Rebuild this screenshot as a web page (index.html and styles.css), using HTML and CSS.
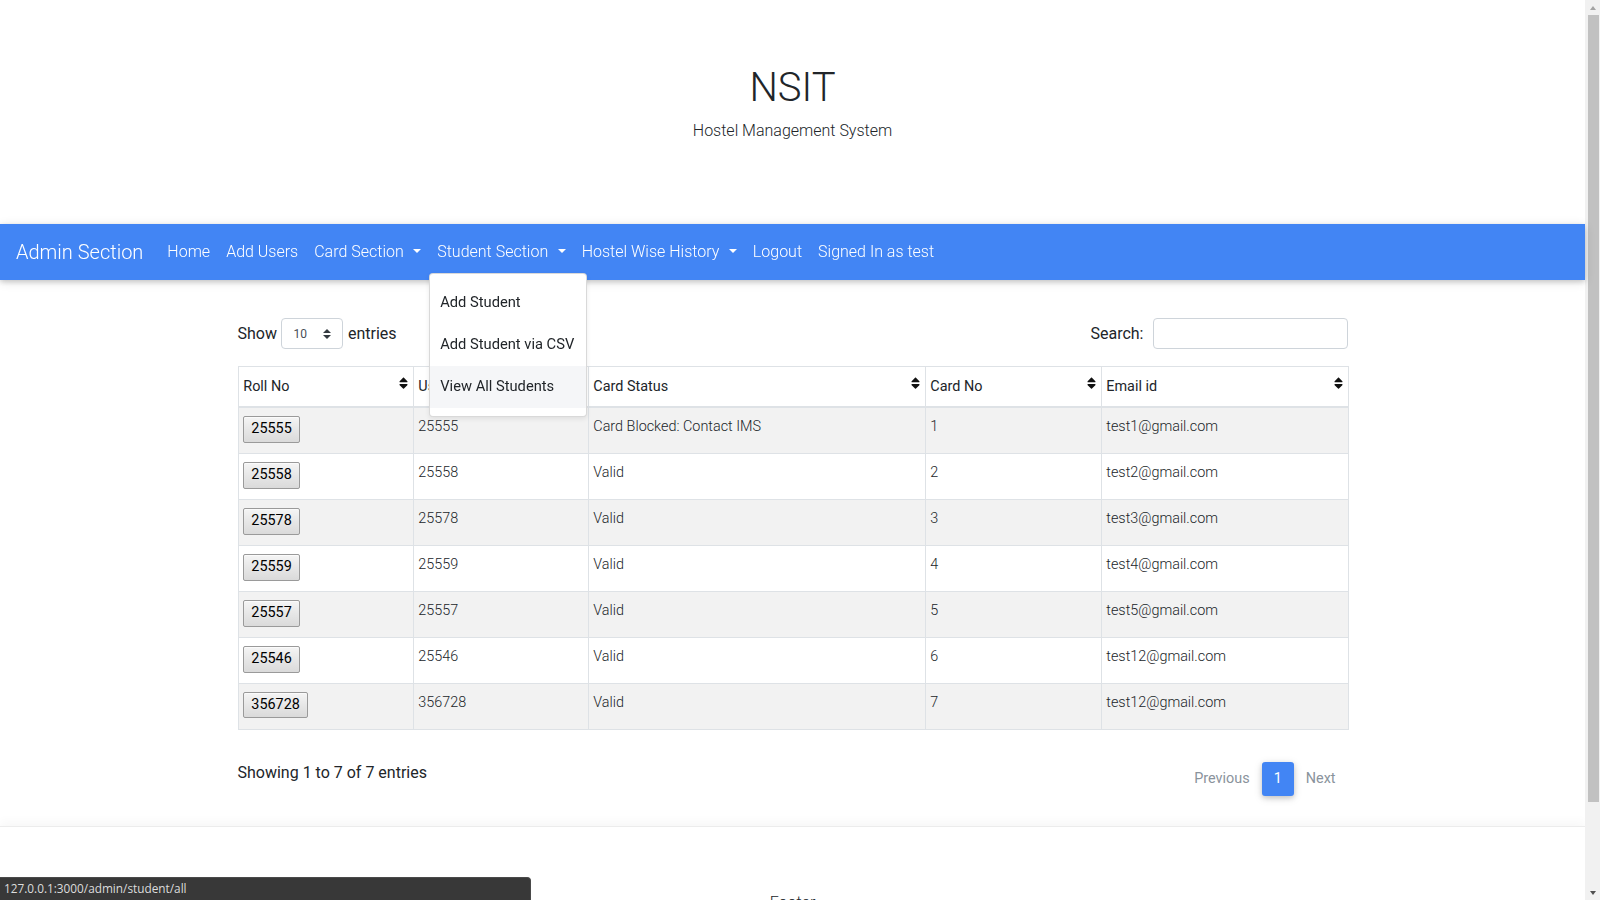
FILE: index.html
```html
<!DOCTYPE html>
<html lang="en">
<head>
<meta charset="utf-8">
<title>Admin - All Students</title>
<link rel="stylesheet" href="styles.css">
</head>
<body>
<div class="page">
  <header class="hero">
    <h1>NSIT</h1>
    <p>Hostel Management System</p>
  </header>

  <nav class="navbar">
    <a class="brand" href="#">Admin Section</a>
    <ul class="nav">
      <li><a class="nav-link" href="#">Home</a></li>
      <li><a class="nav-link" href="#">Add Users</a></li>
      <li><a class="nav-link toggle" href="#">Card Section</a></li>
      <li class="dropdown">
        <a class="nav-link toggle" href="#">Student Section</a>
        <div class="dropdown-menu">
          <a class="dropdown-item" href="#">Add Student</a>
          <a class="dropdown-item" href="#">Add Student via CSV</a>
          <a class="dropdown-item hover" href="#">View All Students</a>
        </div>
      </li>
      <li><a class="nav-link toggle" href="#">Hostel Wise History</a></li>
      <li><a class="nav-link" href="#">Logout</a></li>
      <li><a class="nav-link" href="#">Signed In as test</a></li>
    </ul>
  </nav>

  <main class="container">
    <div class="dt-top">
      <label class="dt-length">Show
        <span class="select-wrap">
          <select class="select"><option>10</option><option>25</option><option>50</option></select>
          <svg class="select-arrow" width="8" height="10" viewBox="0 0 4 5"><path d="M2 0L0 2h4zm0 5L0 3h4z" fill="#343a40"/></svg>
        </span>
        entries</label>
      <label class="dt-search">Search: <input class="search-input" type="search"></label>
    </div>

    <table class="dt-table">
      <colgroup>
        <col class="c-roll"><col class="c-user"><col class="c-status"><col class="c-card"><col class="c-email">
      </colgroup>
      <thead>
        <tr>
          <th><div class="th-in"><span>Roll No</span><svg class="sort" viewBox="0 0 320 512"><path d="M41 288h238c21.4 0 32.1 25.9 17 41L177 448c-9.4 9.4-24.6 9.4-33.9 0L24 329c-15.1-15.1-4.4-41 17-41zm255-105L177 64c-9.4-9.4-24.6-9.4-33.9 0L24 183c-15.1 15.1-4.4 41 17 41h238c21.4 0 32.1-25.9 17-41z"/></svg></div></th>
          <th><div class="th-in"><span>Username</span><svg class="sort" viewBox="0 0 320 512"><path d="M41 288h238c21.4 0 32.1 25.9 17 41L177 448c-9.4 9.4-24.6 9.4-33.9 0L24 329c-15.1-15.1-4.4-41 17-41zm255-105L177 64c-9.4-9.4-24.6-9.4-33.9 0L24 183c-15.1 15.1-4.4 41 17 41h238c21.4 0 32.1-25.9 17-41z"/></svg></div></th>
          <th><div class="th-in"><span>Card Status</span><svg class="sort" viewBox="0 0 320 512"><path d="M41 288h238c21.4 0 32.1 25.9 17 41L177 448c-9.4 9.4-24.6 9.4-33.9 0L24 329c-15.1-15.1-4.4-41 17-41zm255-105L177 64c-9.4-9.4-24.6-9.4-33.9 0L24 183c-15.1 15.1-4.4 41 17 41h238c21.4 0 32.1-25.9 17-41z"/></svg></div></th>
          <th><div class="th-in"><span>Card No</span><svg class="sort" viewBox="0 0 320 512"><path d="M41 288h238c21.4 0 32.1 25.9 17 41L177 448c-9.4 9.4-24.6 9.4-33.9 0L24 329c-15.1-15.1-4.4-41 17-41zm255-105L177 64c-9.4-9.4-24.6-9.4-33.9 0L24 183c-15.1 15.1-4.4 41 17 41h238c21.4 0 32.1-25.9 17-41z"/></svg></div></th>
          <th><div class="th-in"><span>Email id</span><svg class="sort" viewBox="0 0 320 512"><path d="M41 288h238c21.4 0 32.1 25.9 17 41L177 448c-9.4 9.4-24.6 9.4-33.9 0L24 329c-15.1-15.1-4.4-41 17-41zm255-105L177 64c-9.4-9.4-24.6-9.4-33.9 0L24 183c-15.1 15.1-4.4 41 17 41h238c21.4 0 32.1-25.9 17-41z"/></svg></div></th>
        </tr>
      </thead>
      <tbody>
        <tr><td><button class="roll-btn">25555</button></td><td>25555</td><td>Card Blocked: Contact IMS</td><td>1</td><td>test1@gmail.com</td></tr>
        <tr><td><button class="roll-btn">25558</button></td><td>25558</td><td>Valid</td><td>2</td><td>test2@gmail.com</td></tr>
        <tr><td><button class="roll-btn">25578</button></td><td>25578</td><td>Valid</td><td>3</td><td>test3@gmail.com</td></tr>
        <tr><td><button class="roll-btn">25559</button></td><td>25559</td><td>Valid</td><td>4</td><td>test4@gmail.com</td></tr>
        <tr><td><button class="roll-btn">25557</button></td><td>25557</td><td>Valid</td><td>5</td><td>test5@gmail.com</td></tr>
        <tr><td><button class="roll-btn">25546</button></td><td>25546</td><td>Valid</td><td>6</td><td>test12@gmail.com</td></tr>
        <tr><td><button class="roll-btn">356728</button></td><td>356728</td><td>Valid</td><td>7</td><td>test12@gmail.com</td></tr>
      </tbody>
    </table>

    <div class="dt-bottom">
      <div class="dt-info">Showing 1 to 7 of 7 entries</div>
      <ul class="pagination">
        <li><a class="page-link disabled" href="#">Previous</a></li>
        <li><a class="page-link active" href="#">1</a></li>
        <li><a class="page-link disabled" href="#">Next</a></li>
      </ul>
    </div>
  </main>

  <footer class="footer">Footer</footer>
</div>

<div class="statusbar">127.0.0.1:3000/admin/student/all</div>

<div class="scrollbar">
  <div class="sb-btn"><span class="sb-up"></span></div>
  <div class="sb-thumb"></div>
  <div class="sb-track"></div>
  <div class="sb-btn"><span class="sb-down"></span></div>
</div>
</body>
</html>
```

FILE: styles.css
```css
* { box-sizing: border-box; }

html, body {
  margin: 0;
  height: 100%;
  overflow: hidden;
}

body {
  font-family: Roboto, "Liberation Sans", Arial, sans-serif;
  font-weight: 300;
  font-size: 16px;
  line-height: 1.5;
  color: #212529;
  background: #fff;
}

.page {
  margin-right: 15px;
}

/* ---------- hero ---------- */
.hero {
  height: 224px;
  padding-top: 64px;
  text-align: center;
}
.hero h1 {
  margin: 0 0 7px;
  font-size: 40px;
  line-height: 48px;
  font-weight: 300;
}
.hero p {
  margin: 0;
  font-size: 16px;
  line-height: 24px;
}

/* ---------- navbar ---------- */
.navbar {
  position: relative;
  z-index: 5;
  height: 56px;
  padding: 8px 16px;
  display: flex;
  align-items: center;
  background: #4285f4;
  box-shadow: 0 2px 5px 0 rgba(0,0,0,.16), 0 2px 10px 0 rgba(0,0,0,.12);
  font-weight: 300;
}
.brand {
  margin-right: 16px;
  font-size: 20px;
  line-height: 30px;
  color: #fff;
  text-decoration: none;
}
.nav {
  display: flex;
  list-style: none;
  margin: 0;
  padding: 0;
}
.nav-link {
  display: block;
  padding: 8px;
  font-size: 16px;
  line-height: 24px;
  color: #fff;
  text-decoration: none;
}
.toggle::after {
  content: "";
  display: inline-block;
  margin-left: 9.5px;
  vertical-align: 4px;
  border-top: 4.6px solid;
  border-right: 4.8px solid transparent;
  border-left: 4.8px solid transparent;
  border-bottom: 0;
}
.dropdown {
  position: relative;
}
.dropdown-menu {
  position: absolute;
  top: 100%;
  left: 0;
  margin-top: 1px;
  width: 158px;
  padding: 8px 0 8px;
  background: #fff;
  border: 1px solid rgba(0,0,0,.15);
  border-radius: 4px;
  box-shadow: 0 2px 5px 0 rgba(0,0,0,.08);
}
.dropdown-item {
  display: block;
  padding: 10.2px 10px;
  font-size: 14.7px;
  line-height: 21.6px;
  font-weight: 400;
  color: #212529;
  text-decoration: none;
  white-space: nowrap;
}
.dropdown-item.hover {
  background: #f5f6f8;
}

/* ---------- main ---------- */
.container {
  width: 1110px;
  margin: 0 auto;
  padding: 38px 0 30px;
}

.dt-top {
  height: 31px;
  margin-bottom: 17px;
  display: flex;
  justify-content: space-between;
  align-items: center;
  font-weight: 400;
}
.dt-length {
  display: flex;
  align-items: center;
  gap: 4.5px;
}
.select-wrap {
  width: 62px;
  height: 31px;
  padding: 0 11px 0 11px;
  display: inline-flex;
  align-items: center;
  justify-content: space-between;
  border: 1px solid #ced4da;
  border-radius: 4px;
  background: #fff;
}
.select {
  appearance: none;
  -webkit-appearance: none;
  border: 0;
  padding: 0;
  margin: 0;
  background: transparent;
  font-family: Roboto, sans-serif;
  font-size: 12px;
  color: #495057;
  outline: none;
}
.select-arrow { display: block; }

.dt-search {
  display: flex;
  align-items: center;
  gap: 9px;
}
.search-input {
  width: 195px;
  height: 31px;
  border: 1px solid #ced4da;
  border-radius: 4px;
  padding: 0 8px;
  font-family: Roboto, sans-serif;
  font-size: 14px;
}

/* ---------- table ---------- */
.dt-table {
  width: 1110px;
  border-collapse: collapse;
  table-layout: fixed;
}
.c-roll { width: 175px; }
.c-user { width: 175px; }
.c-status { width: 337px; }
.c-card { width: 176px; }
.c-email { width: 247px; }

.dt-table th,
.dt-table td {
  border: 1px solid #dee2e6;
  text-align: left;
  vertical-align: top;
  font-size: 14.4px;
  line-height: 21.6px;
}
.dt-table th {
  padding: 8.6px 4.8px 8.8px;
  font-weight: 400;
  border-bottom: 2px solid #dee2e6;
  background: #fff;
}
.dt-table td {
  padding: 8px 4.8px 10.4px;
  font-weight: 300;
}
.dt-table tbody tr:nth-child(odd) {
  background: #f2f2f2;
}
.th-in {
  display: flex;
  justify-content: space-between;
  align-items: flex-start;
}
.sort {
  width: 9px;
  height: 14.4px;
  flex: none;
  fill: #111;
}
.roll-btn {
  display: inline-block;
  vertical-align: top;
  margin: 0;
  padding: 1.5px 7px;
  font-family: Roboto, sans-serif;
  font-size: 14.4px;
  line-height: 21.6px;
  font-weight: 400;
  color: #000;
  border: 1px solid #9a9a9a;
  border-radius: 2px;
  background: linear-gradient(#f5f5f5, #e8e8e8 45%, #dadada);
  box-shadow: inset 0 1px 1px rgba(255,255,255,.7);
}

/* ---------- bottom ---------- */
.dt-bottom {
  margin-top: 31px;
  display: flex;
  justify-content: space-between;
  align-items: flex-start;
}
.dt-info {
  font-weight: 400;
  line-height: 24px;
}
.pagination {
  display: flex;
  list-style: none;
  margin: 1px 0 0;
  padding: 0;
}
.page-link {
  display: block;
  padding: 8px 12px;
  font-size: 14.4px;
  line-height: 18px;
  font-weight: 400;
  text-decoration: none;
  border-radius: 3px;
}
.page-link.disabled {
  color: #8a939c;
}
.page-link.active {
  background: #4285f4;
  color: #fff;
  box-shadow: 0 2px 5px 0 rgba(0,0,0,.16), 0 2px 10px 0 rgba(0,0,0,.12);
}

/* ---------- footer ---------- */
.footer {
  border-top: 1px solid #ececec;
  box-shadow: 0 -4px 10px rgba(0,0,0,.035);
  padding: 64px 0 80px;
  text-align: center;
  font-size: 16px;
  line-height: 24px;
}

/* ---------- browser chrome overlays ---------- */
.statusbar {
  position: fixed;
  left: 0;
  bottom: 0;
  width: 531px;
  height: 23px;
  padding: 0 4px;
  background: #383838;
  border-top: 1px solid #4a4a4a;
  border-right: 1px solid #4a4a4a;
  border-top-right-radius: 4px;
  color: #dcdcdc;
  font-family: "Open Sans", "Liberation Sans", sans-serif;
  font-size: 11.8px;
  font-weight: 400;
  line-height: 21px;
}
.scrollbar {
  position: fixed;
  top: 0;
  right: 0;
  width: 15px;
  height: 100%;
  background: #f1f1f1;
  display: flex;
  flex-direction: column;
  align-items: center;
}
.sb-btn {
  height: 15px;
  width: 15px;
  display: flex;
  align-items: center;
  justify-content: center;
  flex: none;
}
.sb-up {
  border-left: 3.5px solid transparent;
  border-right: 3.5px solid transparent;
  border-bottom: 4px solid #a3a3a3;
}
.sb-down {
  border-left: 3.5px solid transparent;
  border-right: 3.5px solid transparent;
  border-top: 4px solid #505050;
}
.sb-thumb {
  width: 11px;
  height: 787px;
  margin-left: 2px;
  background: #c1c1c1;
  flex: none;
}
.sb-track { flex: 1; }
```
